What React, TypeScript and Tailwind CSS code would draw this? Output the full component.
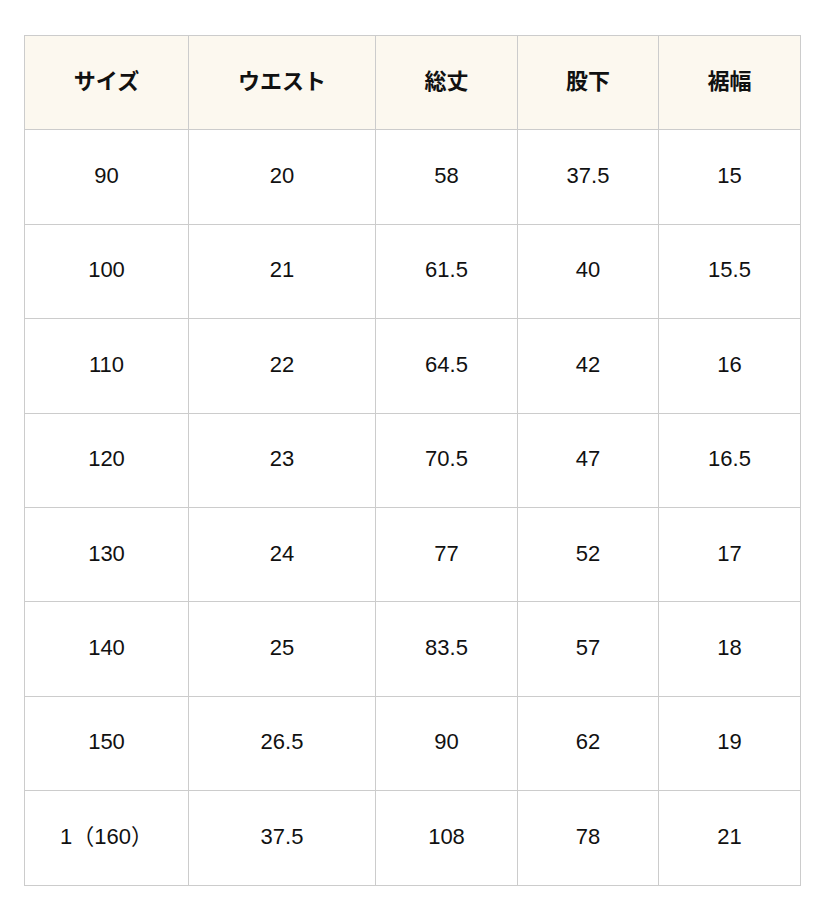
import React from "react";

const headers = ["サイズ", "ウエスト", "総丈", "股下", "裾幅"];
const rows: string[][] = [
  ["90", "20", "58", "37.5", "15"],
  ["100", "21", "61.5", "40", "15.5"],
  ["110", "22", "64.5", "42", "16"],
  ["120", "23", "70.5", "47", "16.5"],
  ["130", "24", "77", "52", "17"],
  ["140", "25", "83.5", "57", "18"],
  ["150", "26.5", "90", "62", "19"],
  ["1（160）", "37.5", "108", "78", "21"],
];
const widths = ["w-[164px]", "w-[187px]", "w-[142px]", "w-[141px]", "w-[142px]"];

export default function App() {
  return (
    <div className="min-h-[900px] bg-white pt-[35px] pl-[24px] [font-family:'Liberation_Sans','Noto_Sans_CJK_JP',sans-serif] text-[#111]">
      <table className="table-fixed border-collapse w-[777px]">
        <colgroup>
          {widths.map((w, i) => (
            <col key={i} className={w} />
          ))}
        </colgroup>
        <thead>
          <tr>
            {headers.map((h) => (
              <th
                key={h}
                className="h-[94.4px] border border-[#cccccc] bg-[#fcf8ef] text-center align-middle text-[22px] font-bold p-0 pb-[3px]"
              >
                {h}
              </th>
            ))}
          </tr>
        </thead>
        <tbody>
          {rows.map((r, ri) => (
            <tr key={ri}>
              {r.map((c, ci) => (
                <td
                  key={ci}
                  className="h-[94.4px] border border-[#cccccc] text-center align-middle text-[22px] p-0 pb-[3px]"
                >
                  {c}
                </td>
              ))}
            </tr>
          ))}
        </tbody>
      </table>
    </div>
  );
}
